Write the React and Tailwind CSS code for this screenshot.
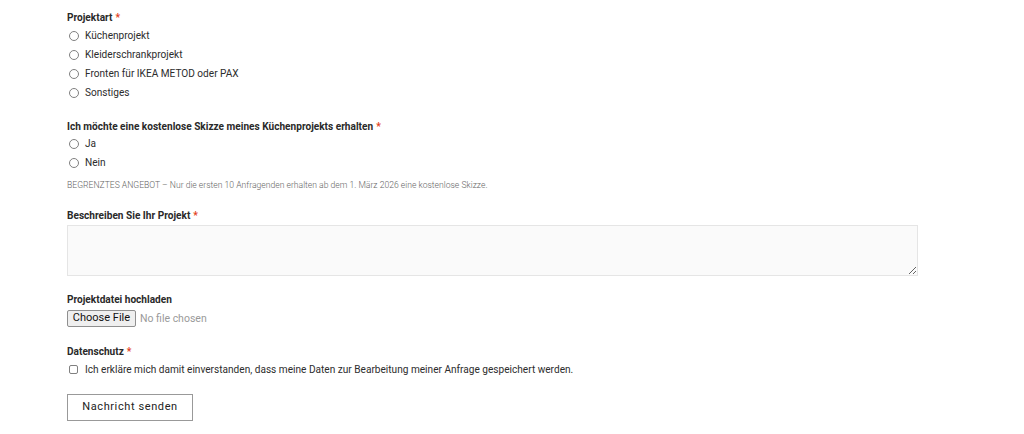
import React from "react";

function Radio({ label }) {
  return (
    <label className="flex items-center h-[19px]">
      <span className="ml-[2px] w-[10px] h-[10px] rounded-full border border-[#808080] bg-white box-border shrink-0" />
      <span className="ml-[6px] text-[10.1px] leading-[19px] text-[#2d2d2d]">{label}</span>
    </label>
  );
}

function Label({ children, req, className = "" }) {
  return (
    <div className={"h-[17px] leading-[17px] text-[10.1px] font-bold text-[#2a2a2a] " + className}>
      {children}
      {req && <span className="text-[#e2401c] ml-[3px]">*</span>}
    </div>
  );
}

export default function App() {
  return (
    <div
      className="w-[1024px] h-[434px] bg-white overflow-hidden"
      style={{ fontFamily: "Roboto, 'Liberation Sans', sans-serif" }}
    >
      <div className="pl-[67px] pt-[9px] flex flex-col">
        <Label req>Projektart</Label>
        <div className="flex flex-col">
          <Radio label="Küchenprojekt" />
          <Radio label="Kleiderschrankprojekt" />
          <Radio label="Fronten für IKEA METOD oder PAX" />
          <Radio label="Sonstiges" />
        </div>

        <Label req className="mt-[16px]">
          Ich möchte eine kostenlose Skizze meines Küchenprojekts erhalten
        </Label>
        <div className="flex flex-col -mt-[1px]">
          <Radio label="Ja" />
          <Radio label="Nein" />
        </div>
        <div className="mt-[7px] h-[12px] leading-[12px] text-[8.6px] font-light text-[#666]">
          BEGRENZTES ANGEBOT – Nur die ersten 10 Anfragenden erhalten ab dem 1. März 2026 eine kostenlose Skizze.
        </div>

        <Label req className="mt-[16px]">
          Beschreiben Sie Ihr Projekt
        </Label>
        <textarea
          className="mt-[1px] w-[851px] h-[51px] bg-[#fafafa] border border-[#e5e5e5] outline-none block"
          readOnly
        />

        <Label className="mt-[15px]">Projektdatei hochladen</Label>
        <div className="mt-[2px] flex items-center h-[17px]">
          <span className="h-[17px] w-[69px] flex items-center justify-center bg-[#efefef] border border-[#8f8f8f] rounded-[2px] text-[11px] text-[#111] box-border">
            Choose File
          </span>
          <span className="ml-[4px] text-[10.5px] text-[#9a9a9a]">No file chosen</span>
        </div>

        <Label req className="mt-[16px]">
          Datenschutz
        </Label>
        <label className="flex items-center h-[19px]">
          <span className="ml-[2px] w-[9px] h-[9px] rounded-[2px] border border-[#808080] bg-white box-border shrink-0" />
          <span className="ml-[7px] text-[10.1px] leading-[19px] text-[#2d2d2d]">
            Ich erkläre mich damit einverstanden, dass meine Daten zur Bearbeitung meiner Anfrage gespeichert werden.
          </span>
        </label>

        <div className="mt-[14px]">
          <button className="w-[126px] h-[27px] border border-[#999] bg-white text-[11px] tracking-[0.6px] text-[#222]">
            Nachricht senden
          </button>
        </div>
      </div>
    </div>
  );
}
